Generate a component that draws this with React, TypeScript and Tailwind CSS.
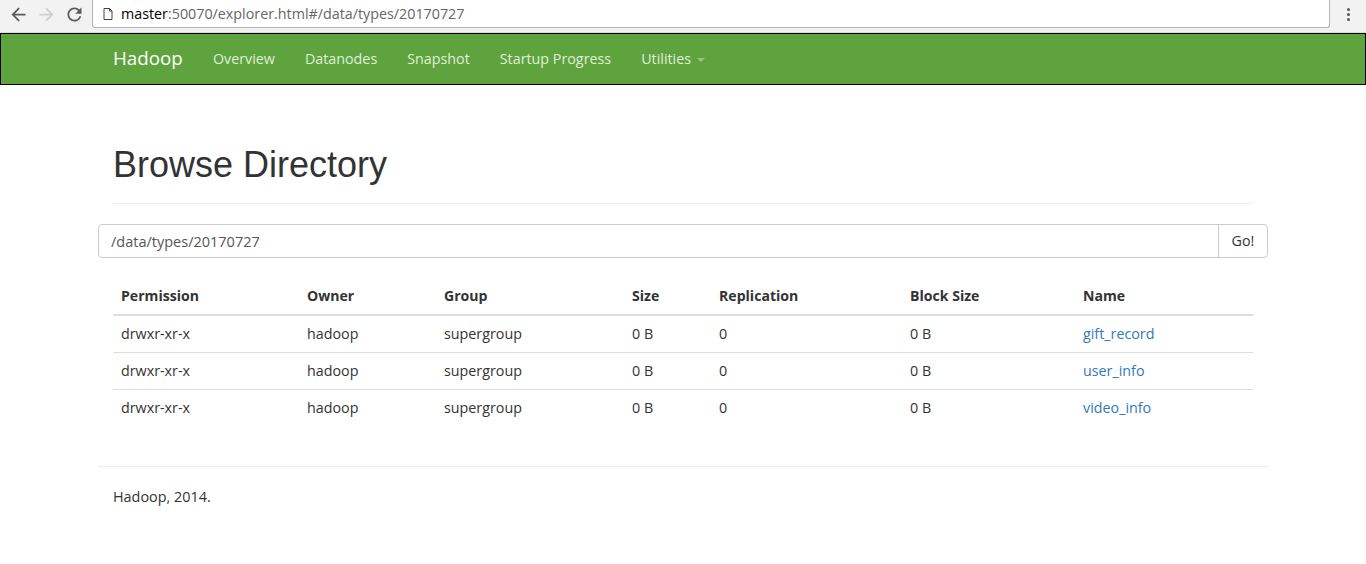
const rows = [
  { perm: "drwxr-xr-x", owner: "hadoop", group: "supergroup", size: "0 B", rep: "0", block: "0 B", name: "gift_record" },
  { perm: "drwxr-xr-x", owner: "hadoop", group: "supergroup", size: "0 B", rep: "0", block: "0 B", name: "user_info" },
  { perm: "drwxr-xr-x", owner: "hadoop", group: "supergroup", size: "0 B", rep: "0", block: "0 B", name: "video_info" },
]

const headers = ["Permission", "Owner", "Group", "Size", "Replication", "Block Size", "Name"]

function BrowserBar() {
  return (
    <div className="flex h-[33px] items-start border-b border-[#dcdcdc] bg-[#f2f2f2]">
      <div className="flex h-[28px] w-[92px] items-center gap-[7px] pl-[8px]">
        <svg width="21" height="21" viewBox="0 0 24 24" fill="#5a5a5a">
          <path d="M20 11H7.83l5.59-5.59L12 4l-8 8 8 8 1.41-1.41L7.83 13H20v-2z" />
        </svg>
        <svg width="21" height="21" viewBox="0 0 24 24" fill="#cfcfcf">
          <path d="M4 11h12.17l-5.59-5.59L12 4l8 8-8 8-1.41-1.41L16.17 13H4v-2z" />
        </svg>
        <svg width="21" height="21" viewBox="0 0 24 24" fill="#5a5a5a">
          <path d="M17.65 6.35A7.958 7.958 0 0 0 12 4c-4.42 0-7.99 3.58-7.99 8s3.57 8 7.99 8c3.73 0 6.84-2.55 7.73-6h-2.08A5.99 5.99 0 0 1 12 18c-3.31 0-6-2.69-6-6s2.69-6 6-6c1.66 0 3.14.69 4.22 1.78L13 11h7V4l-2.35 2.35z" />
        </svg>
      </div>
      <div className="flex h-[28px] w-[1238px] items-center rounded-b-[3px] border border-t-0 border-[#b4b4b4] bg-white pl-[10px] text-[14.3px]">
        <svg width="10" height="12" viewBox="0 0 10 12" className="mr-[8px] shrink-0">
          <path d="M1 .5h5.5L9 3v8.5H1z M6.5 .5V3H9" fill="none" stroke="#444" strokeWidth="1" />
        </svg>
        <span className="text-black">master</span>
        <span className="text-[#666]">:50070/explorer.html#/data/types/20170727</span>
      </div>
      <div className="flex h-[28px] flex-1 flex-col items-center justify-center gap-[2px]">
        <span className="h-[3px] w-[3px] rounded-full bg-[#555]" />
        <span className="h-[3px] w-[3px] rounded-full bg-[#555]" />
        <span className="h-[3px] w-[3px] rounded-full bg-[#555]" />
      </div>
    </div>
  )
}

function Navbar() {
  return (
    <nav className="h-[52px] border border-black bg-[#5fa33e]">
      <div className="mx-auto flex h-full w-[1170px] items-center px-[15px] pb-[1px] text-[14.3px] text-[#dff0d8]">
        <span className="mr-[30px] text-[18.8px] text-white">Hadoop</span>
        <span className="mr-[30px]">Overview</span>
        <span className="mr-[30px]">Datanodes</span>
        <span className="mr-[30px]">Snapshot</span>
        <span className="mr-[30px]">Startup Progress</span>
        <span className="flex items-center">
          Utilities
          <span className="ml-[6px] mt-[2px] h-0 w-0 border-x-[4px] border-t-[4px] border-x-transparent border-t-[#9fc08d]" />
        </span>
      </div>
    </nav>
  )
}

export default function App() {
  return (
    <div className="h-[564px] overflow-hidden bg-white font-['Open_Sans','Liberation_Sans',sans-serif] text-[14.3px] text-[#333]">
      <BrowserBar />
      <Navbar />
      <div className="mx-auto w-[1170px]">
        <div className="mx-[15px] mt-[60px] border-b border-[#eee] pb-[18px]">
          <h1 className="font-['Liberation_Sans',sans-serif] text-[36px] leading-[40px] text-[#333]">Browse Directory</h1>
        </div>
        <div className="mt-[20px] flex h-[34px] rounded-[4px] border border-[#ccc]">
          <div className="flex flex-1 items-center pl-[12px] pt-[2px] text-[14.5px] text-[#555]">/data/types/20170727</div>
          <div className="flex w-[49px] items-center justify-center border-l border-[#ccc]">Go!</div>
        </div>
        <table className="mx-[15px] mt-[20px] w-[1140px] table-fixed border-collapse">
          <colgroup>
            <col className="w-[186px]" />
            <col className="w-[137px]" />
            <col className="w-[188px]" />
            <col className="w-[87px]" />
            <col className="w-[191px]" />
            <col className="w-[173px]" />
            <col className="w-[178px]" />
          </colgroup>
          <thead>
            <tr className="border-b-2 border-[#ddd]">
              {headers.map((h) => (
                <th key={h} className="h-[37px] px-[8px] pb-[1px] text-left text-[14.1px] font-bold">
                  {h}
                </th>
              ))}
            </tr>
          </thead>
          <tbody>
            {rows.map((r, i) => (
              <tr key={r.name} className={i < rows.length - 1 ? "border-b border-[#ddd]" : ""}>
                <td className="h-[37px] px-[8px]">{r.perm}</td>
                <td className="px-[8px]">{r.owner}</td>
                <td className="px-[8px]">{r.group}</td>
                <td className="px-[8px]">{r.size}</td>
                <td className="px-[8px]">{r.rep}</td>
                <td className="px-[8px]">{r.block}</td>
                <td className="px-[8px] text-[#337ab7]">{r.name}</td>
              </tr>
            ))}
          </tbody>
        </table>
        <div className="mt-[40px] border-t border-[#eee] px-[15px] pt-[19px] text-[14.4px]">Hadoop, 2014.</div>
      </div>
    </div>
  )
}
